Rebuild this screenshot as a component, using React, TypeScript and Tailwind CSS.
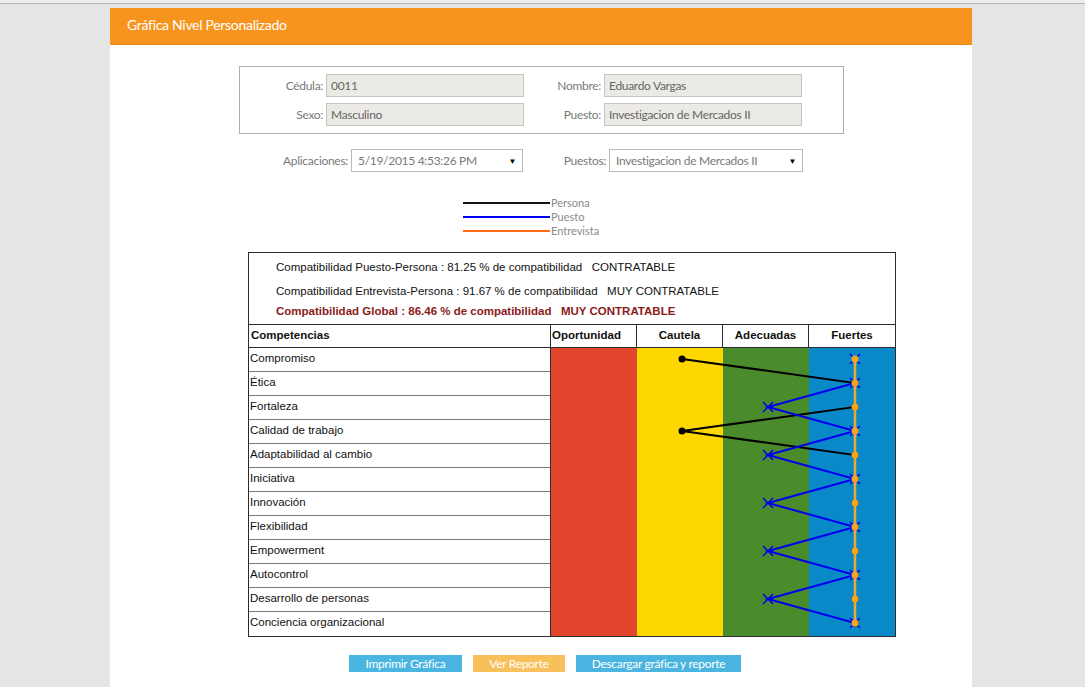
const competencias = [
  "Compromiso",
  "Ética",
  "Fortaleza",
  "Calidad de trabajo",
  "Adaptabilidad al cambio",
  "Iniciativa",
  "Innovación",
  "Flexibilidad",
  "Empowerment",
  "Autocontrol",
  "Desarrollo de personas",
  "Conciencia organizacional",
];

// x position of each column center in the chart area
const C = 131;
const A = 217;
const F = 304;

const persona = [C, F, F, C, F, F, F, F, F, F, F, F];
const puesto = [F, F, A, F, A, F, A, F, A, F, A, F];
const entrevista = competencias.map(() => F);

const rowY = (i: number) => 11 + 24 * i;

function Field({ label, value, labelW }: { label: string; value: string; labelW: string }) {
  return (
    <div className="flex items-center">
      <span className={`${labelW} text-right pr-[3px] text-[12px] text-[#7a7a7a]`}>{label}</span>
      <div className="w-[198px] h-[23px] bg-[#ebeae4] border border-[#c4c4c0] px-[4px] flex items-center text-[12px] text-[#666]">
        {value}
      </div>
    </div>
  );
}

function Select({ label, value, labelW, w }: { label: string; value: string; labelW: string; w: string }) {
  return (
    <div className="flex items-center">
      <span className={`${labelW} text-right pr-[3px] text-[12px] text-[#7a7a7a]`}>{label}</span>
      <div className={`${w} h-[23px] bg-white border border-[#b9b9b9] pl-[6px] pr-[6px] flex items-center justify-between text-[12px] text-[#7a7a7a]`}>
        <span>{value}</span>
        <span className="text-[8px] text-black">▼</span>
      </div>
    </div>
  );
}

function Chart() {
  const pts = (xs: number[]) => xs.map((x, i) => `${x},${rowY(i)}`).join(" ");
  return (
    <svg className="absolute inset-0" width="344" height="288" viewBox="0 0 344 288">
      <polyline points={pts(persona)} fill="none" stroke="#000" strokeWidth="2" />
      {persona.map((x, i) => (
        <circle key={i} cx={x} cy={rowY(i)} r="3.5" fill="#000" />
      ))}
      <polyline points={pts(puesto)} fill="none" stroke="#0000ee" strokeWidth="2" />
      {puesto.map((x, i) => (
        <g key={i} stroke="#0000ee" strokeWidth="1.5">
          <line x1={x - 5} y1={rowY(i) - 5} x2={x + 5} y2={rowY(i) + 5} />
          <line x1={x - 5} y1={rowY(i) + 5} x2={x + 5} y2={rowY(i) - 5} />
        </g>
      ))}
      <polyline points={pts(entrevista)} fill="none" stroke="#f2a62a" strokeWidth="2.5" />
      {entrevista.map((x, i) => (
        <circle key={i} cx={x} cy={rowY(i)} r="3.5" fill="#f7a51c" />
      ))}
    </svg>
  );
}

export default function App() {
  return (
    <div className="h-[687px] w-[1085px] overflow-hidden bg-[#e5e5e5] font-['Lato',sans-serif]">
      <div className="h-[4px] bg-[#ececec] border-b border-[#b8b8b8]" />
      <div className="ml-[110px] mt-[4px] w-[862px] h-[680px] bg-white">
        <div className="h-[37px] bg-[#f7941e] border-b border-[#f08a12] pl-[17px] pb-[3px] flex items-center text-white text-[14px] tracking-[-0.3px]">
          Gráfica Nivel Personalizado
        </div>

        <div className="ml-[129px] mt-[21px] w-[605px] h-[68px] border border-[#aeaeae] pt-[7px] flex flex-col gap-[6px] tracking-[-0.3px]">
          <div className="flex">
            <Field label="Cédula:" value="0011" labelW="w-[86px]" />
            <Field label="Nombre:" value="Eduardo Vargas" labelW="w-[80px]" />
          </div>
          <div className="flex">
            <Field label="Sexo:" value="Masculino" labelW="w-[86px]" />
            <Field label="Puesto:" value="Investigacion de Mercados II" labelW="w-[80px]" />
          </div>
        </div>

        <div className="ml-[129px] mt-[15px] flex tracking-[-0.3px]">
          <Select label="Aplicaciones:" value="5/19/2015 4:53:26 PM" labelW="w-[112px]" w="w-[172px]" />
          <Select label="Puestos:" value="Investigacion de Mercados II" labelW="w-[86px]" w="w-[194px]" />
        </div>

        <div className="ml-[353px] mt-[24px] flex flex-col text-[11px] text-[#8a8a8a] leading-[14px]">
          {[
            ["Persona", "bg-[#111]"],
            ["Puesto", "bg-[#0000ff]"],
            ["Entrevista", "bg-[#ff6a13]"],
          ].map(([name, color]) => (
            <div key={name} className="flex items-center">
              <div className={`w-[87px] h-[2px] ${color}`} />
              <span className="ml-[1px]">{name}</span>
            </div>
          ))}
        </div>

        <div className="ml-[138px] mt-[14px] w-[648px] border border-[#2b2b2b] font-['Liberation_Sans',Arial,sans-serif] text-[11.5px] text-[#111]">
          <div className="h-[71px] pl-[27px] pt-[6px] whitespace-pre">
            <div className="leading-[16px]">Compatibilidad Puesto-Persona : 81.25 % de compatibilidad   CONTRATABLE</div>
            <div className="leading-[16px] mt-[8px]">Compatibilidad Entrevista-Persona : 91.67 % de compatibilidad   MUY CONTRATABLE</div>
            <div className="leading-[16px] mt-[4px] font-bold text-[#8b1a1a]">
              Compatibilidad Global : 86.46 % de compatibilidad   MUY CONTRATABLE
            </div>
          </div>
          <div className="flex h-[24px] border-t border-b border-[#2b2b2b] font-bold">
            <div className="w-[302px] border-r border-[#2b2b2b] pl-[2px] flex items-center">Competencias</div>
            <div className="w-[86px] border-r border-[#2b2b2b] pl-[1px] flex items-center">Oportunidad</div>
            <div className="w-[86px] border-r border-[#2b2b2b] flex items-center justify-center">Cautela</div>
            <div className="w-[86px] border-r border-[#2b2b2b] flex items-center justify-center">Adecuadas</div>
            <div className="w-[86px] flex items-center justify-center">Fuertes</div>
          </div>
          <div className="flex">
            <div className="w-[302px] border-r border-[#2b2b2b]">
              {competencias.map((c, i) => (
                <div
                  key={c}
                  className={`h-[24px] pl-[1px] pb-[2px] flex items-center ${i < competencias.length - 1 ? "border-b border-[#7a7a7a]" : ""}`}
                >
                  {c}
                </div>
              ))}
            </div>
            <div className="relative flex w-[344px] h-[288px]">
              <div className="w-[86px] bg-[#e3452d]" />
              <div className="w-[86px] bg-[#fed700]" />
              <div className="w-[86px] bg-[#4a8b2b]" />
              <div className="w-[86px] bg-[#0a89c9]" />
              <Chart />
            </div>
          </div>
        </div>

        <div className="ml-[239px] mt-[18px] flex gap-[11px] text-white text-[12px] tracking-[-0.3px]">
          <div className="w-[113px] h-[17px] bg-[#4ab5e0] flex items-center justify-center">Imprimir Gráfica</div>
          <div className="w-[92px] h-[17px] bg-[#f8c05a] flex items-center justify-center">Ver Reporte</div>
          <div className="w-[165px] h-[17px] bg-[#4ab5e0] flex items-center justify-center">Descargar gráfica y reporte</div>
        </div>
      </div>
    </div>
  );
}
